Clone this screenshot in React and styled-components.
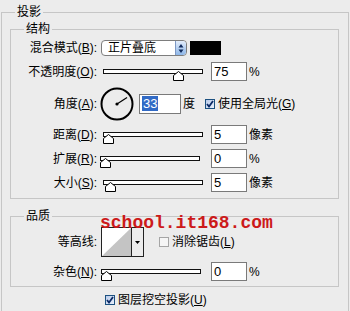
import styled, { createGlobalStyle } from "styled-components";

const GlobalStyle = createGlobalStyle`
  body {
    margin: 0;
    background: #ececec;
    font-family: "Liberation Sans", "Noto Sans CJK SC", sans-serif;
    font-size: 12px;
    color: #000;
  }
`;

const Page = styled.div`
  position: relative;
  width: 350px;
  height: 311px;
  overflow: hidden;
  box-sizing: border-box;
  padding: 4px 0 0 1px;
`;

const Group = styled.fieldset`
  margin: ${(p) => p.$mt || 0}px 0 0;
  padding: ${(p) => p.$pad};
  border: 1px solid #c6c6c6;
  min-width: 0;
  width: ${(p) => p.$w}px;
  box-sizing: border-box;
`;

const Legend = styled.legend`
  margin-left: ${(p) => p.$ml}px;
  padding: 0 2px;
  line-height: 16px;
  font-size: 12px;
`;

const Row = styled.div`
  display: flex;
  align-items: center;
  height: ${(p) => p.$h}px;
  margin-top: ${(p) => p.$mt}px;
`;

const Label = styled.span`
  flex: none;
  width: 86px;
  text-align: right;
  white-space: nowrap;
  line-height: 16px;
`;

const Text = styled.span`
  white-space: nowrap;
  margin-left: ${(p) => p.$ml || 0}px;
  line-height: 16px;
`;

const Select = styled.div`
  display: flex;
  align-items: stretch;
  width: 86px;
  height: 16px;
  margin-left: 4px;
  box-sizing: border-box;
  border: 1px solid #7d7d7d;
  border-radius: 4px;
  background: #fff;
  overflow: hidden;
`;

const SelectText = styled.span`
  flex: 1;
  padding-left: 6px;
  line-height: 14px;
`;

const Spin = styled.span`
  width: 10px;
  display: flex;
  align-items: center;
  justify-content: center;
  border-left: 1px solid #7d98c4;
  border-radius: 0 3px 3px 0;
  background: linear-gradient(#e3edfb, #8db6e8);
`;

const Swatch = styled.span`
  width: 31px;
  height: 14px;
  margin-left: 3px;
  background: #000;
`;

const Track = styled.div`
  position: relative;
  width: 100px;
  height: 5px;
  margin-left: ${(p) => p.$ml}px;
  box-sizing: border-box;
  border: 1px solid #111;
  background: #fff;
`;

const Thumb = styled.svg`
  position: absolute;
  top: 1px;
  width: 11px;
  height: 10px;
  display: block;
`;

const Field = styled.span`
  display: flex;
  align-items: center;
  width: ${(p) => p.$w || 36}px;
  height: ${(p) => p.$h || 19}px;
  margin-left: ${(p) => p.$ml || 8}px;
  box-sizing: border-box;
  border: 1px solid #7a7a7a;
  background: #fff;
  padding-left: 2px;
  font-size: 13px;
`;

const Selected = styled.span`
  background: #316ac5;
  color: #fff;
  padding: 0 1px;
  line-height: 15px;
`;

const Dial = styled.svg`
  width: 34px;
  height: 34px;
  margin-left: 3px;
  display: block;
`;

const Box = styled.span`
  flex: none;
  display: flex;
  align-items: center;
  justify-content: center;
  width: 10px;
  height: 10px;
  margin-left: ${(p) => p.$ml}px;
  box-sizing: border-box;
  border: 1px solid ${(p) => (p.$on ? "#1c5180" : "#a5a5a5")};
  background: ${(p) => (p.$on ? "linear-gradient(135deg, #b9cbea, #e9f0fb)" : "#f5f5f5")};
`;

const Contour = styled.div`
  display: flex;
  height: 30px;
  margin-left: 4px;
  box-sizing: border-box;
  border: 1px solid #222;
`;

const Preview = styled.svg`
  width: 29px;
  height: 28px;
  display: block;
  background: #fff;
  border-right: 1px solid #222;
`;

const DropArrow = styled.span`
  width: 11px;
  display: flex;
  align-items: center;
  justify-content: center;
`;

const Watermark = styled.div`
  position: absolute;
  left: 100px;
  top: 214px;
  font-family: "Liberation Mono", monospace;
  font-weight: bold;
  font-size: 18px;
  line-height: 18px;
  color: #cc1a1a;
  white-space: nowrap;
`;

const Slider = ({ value, max, ml }) => (
  <Track $ml={ml}>
    <Thumb viewBox="0 0 11 10" style={{ left: Math.round((value / max) * 93) - 1 }}>
      <path d="M0.5 9.5V4.5L5.5 0.5L10.5 4.5V9.5Z" fill="#fff" stroke="#000" />
    </Thumb>
  </Track>
);

const Check = ({ on, ml }) => (
  <Box $on={on} $ml={ml}>
    {on && (
      <svg width="8" height="8" viewBox="0 0 8 8">
        <path d="M1 4L3 6.5L7 1" fill="none" stroke="#0b2a66" strokeWidth="1.8" />
      </svg>
    )}
  </Box>
);

const angle = (33 * Math.PI) / 180;

export default function App() {
  return (
    <>
      <GlobalStyle />
      <Page>
        <Group $w={348} $pad="1px 9px 20px 8px">
          <Legend $ml={5}>投影</Legend>

          <Group $pad="0 0 6px 0">
            <Legend $ml={13}>结构</Legend>
            <Row $h={16} $mt={3}>
              <Label>混合模式(<u>B</u>):</Label>
              <Select>
                <SelectText>正片叠底</SelectText>
                <Spin>
                  <svg width="6" height="11" viewBox="0 0 6 11">
                    <path d="M3 1L5.5 4.5H0.5Z M3 10L5.5 6.5H0.5Z" fill="#102a5c" />
                  </svg>
                </Spin>
              </Select>
              <Swatch />
            </Row>
            <Row $h={19} $mt={6}>
              <Label>不透明度(<u>O</u>):</Label>
              <Slider value={75} max={100} ml={6} />
              <Field>75</Field>
              <Text $ml={2}>%</Text>
            </Row>
            <Row $h={33} $mt={6}>
              <Label>角度(<u>A</u>):</Label>
              <Dial viewBox="0 0 34 34">
                <circle cx="17" cy="17" r="15.5" fill="none" stroke="#000" strokeWidth="2" />
                <circle cx="17" cy="17" r="1.6" fill="#000" />
                <line
                  x1="17"
                  y1="17"
                  x2={17 + 12 * Math.cos(angle)}
                  y2={17 - 12 * Math.sin(angle)}
                  stroke="#000"
                  strokeWidth="1.2"
                />
              </Dial>
              <Field $w={42} $h={20} $ml={5}>
                <Selected>33</Selected>
              </Field>
              <Text $ml={2}>度</Text>
              <Check on ml={10} />
              <Text $ml={3}>使用全局光(<u>G</u>)</Text>
            </Row>
            <Row $h={19} $mt={5}>
              <Label>距离(<u>D</u>):</Label>
              <Slider value={0} max={30000} ml={6} />
              <Field>5</Field>
              <Text $ml={2}>像素</Text>
            </Row>
            <Row $h={19} $mt={5}>
              <Label>扩展(<u>R</u>):</Label>
              <Slider value={0} max={100} ml={3} />
              <Field $ml={11}>0</Field>
              <Text $ml={2}>%</Text>
            </Row>
            <Row $h={19} $mt={5}>
              <Label>大小(<u>S</u>):</Label>
              <Slider value={5} max={250} ml={6} />
              <Field>5</Field>
              <Text $ml={2}>像素</Text>
            </Row>
          </Group>

          <Group $mt={9} $pad="0 0 5px 0">
            <Legend $ml={13}>品质</Legend>
            <Row $h={30} $mt={3}>
              <Label>等高线:</Label>
              <Contour>
                <Preview viewBox="0 0 29 28">
                  <path d="M0 28L29 0V28Z" fill="#c4c4c4" />
                </Preview>
                <DropArrow>
                  <svg width="5" height="3" viewBox="0 0 5 3">
                    <path d="M0 0H5L2.5 3Z" fill="#000" />
                  </svg>
                </DropArrow>
              </Contour>
              <Check ml={15} />
              <Text $ml={3}>消除锯齿(<u>L</u>)</Text>
            </Row>
            <Row $h={19} $mt={5}>
              <Label>杂色(<u>N</u>):</Label>
              <Slider value={0} max={100} ml={4} />
              <Field $ml={10}>0</Field>
              <Text $ml={2}>%</Text>
            </Row>
          </Group>

          <Row $h={16} $mt={5}>
            <Check on ml={95} />
            <Text $ml={3}>图层挖空投影(<u>U</u>)</Text>
          </Row>
        </Group>
        <Watermark>school.it168.com</Watermark>
      </Page>
    </>
  );
}
